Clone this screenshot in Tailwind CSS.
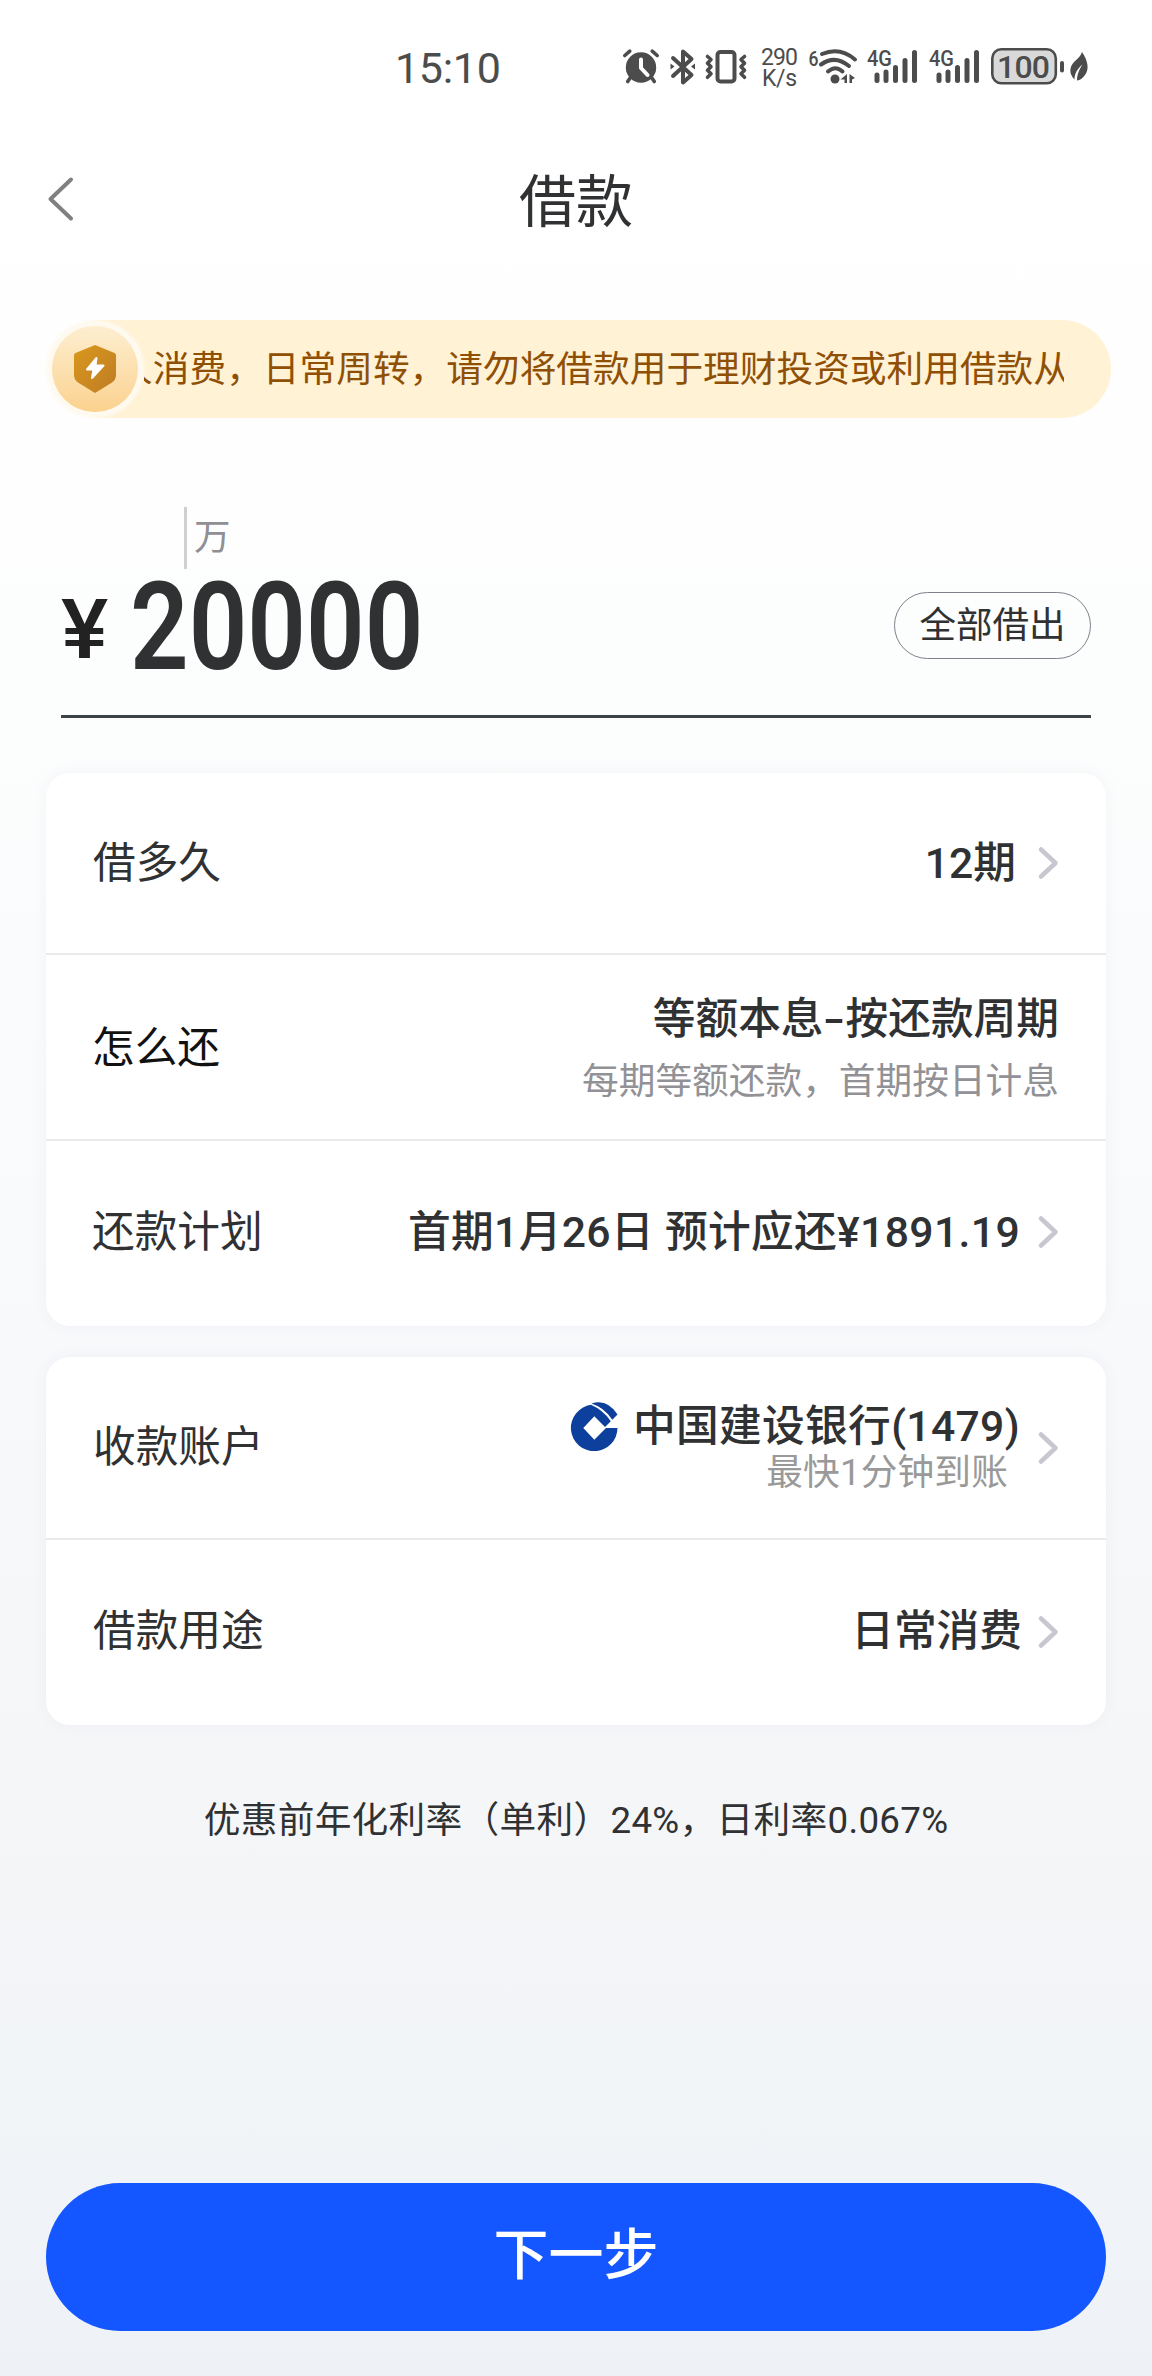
<!DOCTYPE html>
<html lang="zh-CN">
<head>
<meta charset="utf-8">
<title>借款</title>
<script src="https://cdn.jsdelivr.net/npm/@tailwindcss/browser@4"></script>
</head>
<body class="bg-white">
<div class="flex h-[2376px] w-[1152px] flex-col overflow-hidden bg-[linear-gradient(to_bottom,#ffffff_0%,#fefefe_20%,#fcfdfd_31%,#f8f9fb_56%,#f5f6f8_76%,#f1f4f7_90%,#eef1f6_100%)] font-['Roboto','Noto_Sans_CJK_SC',sans-serif] text-[#303133]">

  <!-- status bar -->
  <div class="flex h-[136px] w-full items-center text-[#4c4c4c]">
    <span class="ml-[395px] w-[228px] text-[43px] leading-[136px] tracking-[-0.3px] whitespace-nowrap">15:10</span>
    <svg class="-mt-0.5 h-10 w-[470px] shrink-0 overflow-visible" viewBox="623 48 470 40" fill="none" stroke="#4c4c4c" stroke-linecap="round" stroke-linejoin="round">
      <!-- alarm -->
      <circle cx="641" cy="68.500" r="15.200" fill="#4c4c4c" stroke="none"/>
      <path d="M624.800 56.500l5-4.300M657.200 56.500l-5-4.300M630.500 78.500l-2.800 4M651.500 78.500l2.800 4" stroke-width="3.600"/>
      <path d="M641 60.500v8.500l6.500 7" stroke="#fff" stroke-width="4"/>
      <!-- bluetooth -->
      <path d="M673 59l18.500 17-8.500 7.500v-31l8.500 7.500L673 77" stroke-width="4"/>
      <path d="M670.500 64.500v6l4-3zM695 64.500v6l-4-3z" fill="#4c4c4c" stroke="none"/>
      <!-- vibrate -->
      <rect x="717.500" y="53" width="17" height="29.500" rx="3" stroke-width="4"/>
      <path d="M707.500 57.500l3.500 3-3.500 3.800 3.500 3.500-3.500 3.500 3.500 3.500-3.500 3.500M744.500 57.500l-3.500 3 3.500 3.800-3.500 3.500 3.500 3.500-3.500 3.500 3.500 3.500" stroke-width="3.600"/>
      <g fill="#4c4c4c" stroke="none" font-family="Roboto, sans-serif">
        <text x="761" y="66" font-size="23" textLength="37">290</text>
        <text x="762" y="86.500" font-size="23" textLength="35">K/s</text>
        <text x="808.500" y="66.500" font-size="21" font-weight="500" textLength="10" lengthAdjust="spacingAndGlyphs">6</text>
        <text x="867" y="67" font-size="22.500" font-weight="500" textLength="25" lengthAdjust="spacingAndGlyphs">4G</text>
        <text x="929" y="67" font-size="22.500" font-weight="500" textLength="25" lengthAdjust="spacingAndGlyphs">4G</text>
      </g>
      <!-- wifi -->
      <path d="M822 55q18-7.500 33 5.500M821 65.500q14-10 28 1.500M828 72.500q7.500-6.500 14.500 0" stroke-width="4"/>
      <circle cx="835" cy="80" r="4.500" fill="#4c4c4c" stroke="none"/>
      <path d="M847 75v9h-2.500v-3.500h-4zM849.500 75v9h2.500v-3.500l3-1.500z" fill="#4c4c4c" stroke="none"/>
      <!-- signal strength -->
      <path d="M877 76v5.500M886 73v8.500M895.500 68.500v13M905 61.500v20M914.500 53.500v28" stroke-width="5"/>
      <path d="M939 76v5.500M948 73v8.500M957.500 68.500v13M967 61.500v20M976.500 53.500v28" stroke-width="5"/>
      <!-- battery -->
      <rect x="992.300" y="50.300" width="63.500" height="34" rx="9" fill="#d9d9d9" stroke-width="2.600"/>
      <path d="M1062 64v7.500" stroke-width="4"/>
      <text x="997" y="79" font-size="32" font-weight="500" fill="#4c4c4c" stroke="none" font-family="Roboto, sans-serif" textLength="53">100</text>
      <!-- leaf -->
      <path d="M1082 53c6 9 7.500 17 3 23-2.500 3.500-5 5-8 5.500 0-7 3-12 5.500-16-5 4-8 9-8 15-6-6-5-13 0-18 4-3.500 6.500-6 7.500-9.500z" fill="#4c4c4c" stroke="none"/>
    </svg>
  </div>

  <!-- title bar -->
  <header class="grid h-[130px] grid-cols-[1fr_auto_1fr] items-center">
    <svg class="-mt-1 ml-[46px] h-[46px] w-7" viewBox="0 0 28 46" fill="none" stroke="#808080" stroke-width="4" stroke-linecap="round" stroke-linejoin="round"><path d="M25 3.500L4.500 23 25 42.500"/></svg>
    <h1 class="pt-1 text-[57px] leading-[126px]">借款</h1>
    <span></span>
  </header>

  <!-- notice -->
  <div class="mt-[54px] ml-[52px] flex h-[98px] w-[1059px] items-center rounded-full bg-[#fff2d5]">
    <div class="flex size-[86px] shrink-0 items-center justify-center rounded-full bg-linear-to-b from-[#fdeed0] to-[#fbd28f] shadow-[0_0_3px_6px_#fffaf0]">
      <svg class="h-[50px] w-11" viewBox="0 0 44 50"><defs><linearGradient id="sh" x1="0" y1="0" x2="1" y2="1"><stop offset="0" stop-color="#d9981c"/><stop offset="1" stop-color="#bf7c26"/></linearGradient></defs><path d="M22 1l19.500 8q1.500 .7 1.500 2.500V31q0 4.500-4 7.500L22 49 5 38.500Q1 35.500 1 31V11.500q0-1.800 1.500-2.500z" fill="url(#sh)"/><path d="M23.500 14L14 25.500h6.500L19 34l11.500-12.500h-8z" fill="#fff" stroke="#fff" stroke-width="2" stroke-linejoin="round"/></svg>
    </div>
    <div class="ml-[6px] flex w-[920px] justify-end overflow-hidden">
      <span class="-mr-[6px] shrink-0 pt-px text-[36.700px] leading-[60px] whitespace-nowrap text-[#8f5006]">个人消费，日常周转，请勿将借款用于理财投资或利用借款从</span>
    </div>
  </div>

  <!-- amount -->
  <section class="mt-[89px] ml-[61px] w-[1030px]">
    <div class="ml-[123px] flex h-[62px] items-center border-l-3 border-[#cfcfcf] pl-[7px] text-[36.500px] text-[#8f8f94]">万</div>
    <div class="flex h-[146px] items-start justify-between">
      <div class="flex h-[146px] items-start">
        <span class="w-[69px] origin-left scale-x-[1.06] text-[84px] leading-[121px] font-medium text-[#222]">¥</span>
        <span class="origin-left scale-x-[0.835] pt-px text-[123px] leading-[114px] font-semibold">20000</span>
      </div>
      <button class="mt-[23px] flex h-[67px] w-[197px] items-center justify-center rounded-full border border-[#80808c] pt-0.5 text-[36.500px] whitespace-nowrap">全部借出</button>
    </div>
    <div class="h-[3px] bg-[#3d4246]"></div>
  </section>

  <!-- loan terms -->
  <section class="mx-[46px] mt-[55px] h-[553px] rounded-[24px] bg-white text-[42.700px] shadow-[0_0_16px_rgba(60,80,120,0.05)]">
    <div class="flex h-[182px] items-center border-b-2 border-[#e9eaec] px-[47px]">
      <span>借多久</span>
      <span class="ml-auto font-medium">12期</span>
      <svg class="ml-[21px] h-9 w-[22px]" viewBox="0 0 22 36" fill="none" stroke="#c6c7cf" stroke-width="4.500" stroke-linecap="round" stroke-linejoin="round"><path d="M4 4.500L18.500 18 4 31.500"/></svg>
    </div>
    <div class="flex h-[186px] items-center border-b-2 border-[#e9eaec] px-[47px]">
      <span class="-ml-px pt-0.5 text-[#111]">怎么还</span>
      <div class="ml-auto flex flex-col items-end pt-[6px]">
        <span class="flex leading-[64px] font-medium">等额本息<span class="flex w-[22px] justify-center"><span class="scale-x-[1.5]">-</span></span>按还款周期</span>
        <span class="text-[36.700px] leading-[62px] text-[#919196]">每期等额还款，首期按日计息</span>
      </div>
    </div>
    <div class="flex h-[182px] items-center px-[47px]">
      <span class="-ml-px">还款计划</span>
      <span class="ml-auto font-medium tracking-[0.350px] whitespace-nowrap">首期1月26日 预计应还¥1891.19</span>
      <svg class="ml-[17px] h-9 w-[22px]" viewBox="0 0 22 36" fill="none" stroke="#c6c7cf" stroke-width="4.500" stroke-linecap="round" stroke-linejoin="round"><path d="M4 4.500L18.500 18 4 31.500"/></svg>
    </div>
  </section>

  <!-- account and purpose -->
  <section class="mx-[46px] mt-[31px] h-[368px] rounded-[24px] bg-white text-[42.700px] shadow-[0_0_16px_rgba(60,80,120,0.05)]">
    <div class="flex h-[183px] items-center border-b-2 border-[#e9eaec] px-[47px]">
      <span>收款账户</span>
      <div class="ml-auto flex flex-col items-end">
        <div class="flex items-center">
          <svg class="mr-[13px] size-[50px]" viewBox="0 0 50 50"><path d="M21 3.800A23.300 23.300 0 1 0 47.500 27H36L24.300 38.700 13.300 27 24.300 15.300 35 26l5.800-5.800Q33 9 21 3.800z" fill="#0d3f9c"/><path d="M21.500 2.600Q37-2.500 47.500 13.500L42.300 18.700Q34 6.500 21.500 2.600z" fill="#0d3f9c"/></svg>
          <span class="leading-[50px] font-medium tracking-[0.350px] whitespace-nowrap">中国建设银行(1479)</span>
        </div>
        <span class="mr-3 pt-px text-[36.700px] leading-[42px] tracking-[0.150px] text-[#999]">最快1分钟到账</span>
      </div>
      <svg class="ml-[17px] h-9 w-[22px]" viewBox="0 0 22 36" fill="none" stroke="#c6c7cf" stroke-width="4.500" stroke-linecap="round" stroke-linejoin="round"><path d="M4 4.500L18.500 18 4 31.500"/></svg>
    </div>
    <div class="flex h-[183px] items-center px-[47px]">
      <span>借款用途</span>
      <span class="ml-auto font-medium">日常消费</span>
      <svg class="ml-[15px] h-9 w-[22px]" viewBox="0 0 22 36" fill="none" stroke="#c6c7cf" stroke-width="4.500" stroke-linecap="round" stroke-linejoin="round"><path d="M4 4.500L18.500 18 4 31.500"/></svg>
    </div>
  </section>

  <p class="mt-[66px] text-center text-[36.700px] leading-[60px] tracking-[0.300px] whitespace-nowrap">优惠前年化利率（单利）24%，日利率0.067%</p>

  <button class="mx-[46px] mt-auto mb-[45px] flex h-[148px] shrink-0 items-center justify-center rounded-full bg-[#1456ff] pb-[3px] text-[55px] font-medium text-white">下一步</button>
</div>
</body>
</html>
